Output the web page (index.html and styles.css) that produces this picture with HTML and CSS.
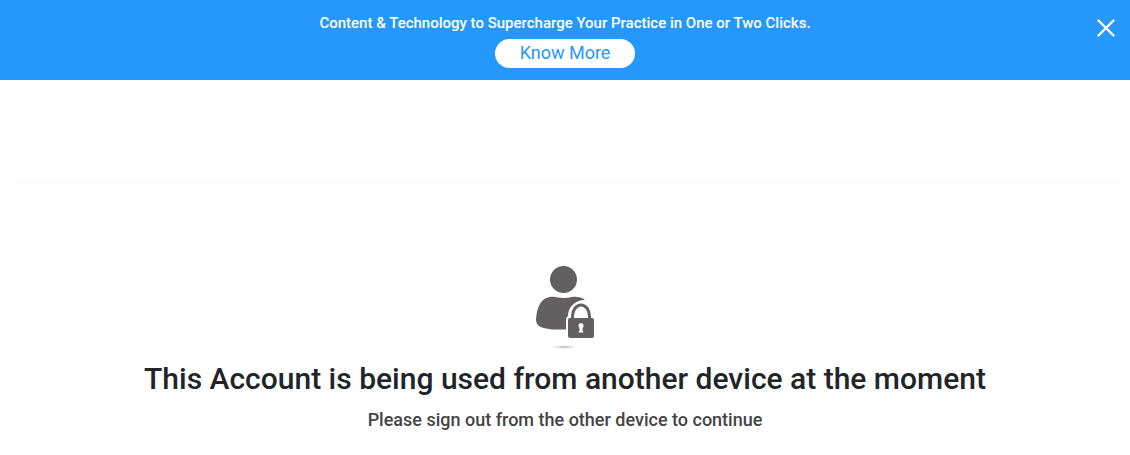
FILE: index.html
```
<!DOCTYPE html>
<html lang="en">
<head>
<meta charset="utf-8">
<title>Account in use</title>
<link rel="stylesheet" href="styles.css">
</head>
<body>
<aside class="banner">
  <div class="banner-content">
    <p class="banner-text">Content &amp; Technology to Supercharge Your Practice in One or Two Clicks.</p>
    <button class="banner-button" type="button">Know More</button>
  </div>
  <button class="close" type="button" aria-label="Close">
    <svg width="18" height="18" viewBox="0 0 18 18"><path d="M1.500 1.500 16.500 16.500M16.500 1.500 1.500 16.500" stroke="currentColor" stroke-width="2.400" fill="none" stroke-linecap="round"/></svg>
  </button>
</aside>
<header class="header"></header>
<main class="message">
  <svg class="lock-icon" width="66" height="88" viewBox="0 0 66 88" aria-hidden="true">
    <defs><radialGradient id="shade"><stop offset="0" stop-color="#aaa"/><stop offset="1" stop-color="#fff" stop-opacity="0"/></radialGradient></defs>
    <g fill="#636061">
      <circle cx="31.500" cy="16.500" r="13.500"/>
      <path d="M18 34C23 33 26 35 32 35S40 33 45 34C48 34 51 35 53 37C43 37 36 44 36 53Q34 54 34 57V66.500C22 67 12 66 7 63Q4 61 4 56C5 44 9 35 18 34Z"/>
      <rect x="36" y="55" width="26" height="20" rx="2"/>
    </g>
    <path d="M40.500 56V53a8.500 11 0 0 1 17 0V56" fill="none" stroke="#636061" stroke-width="3"/>
    <path d="M49 60a2.800 2.800 0 0 1 1.500 5V67.500L51.500 69.500H46.500L47.500 67.500V65A2.800 2.800 0 0 1 49 60Z" fill="#fff"/>
    <ellipse cx="32" cy="84" rx="17" ry="2.500" fill="url(#shade)"/>
  </svg>
  <h1 class="title">This Account is being used from another device at the moment</h1>
  <p class="subtitle">Please sign out from the other device to continue</p>
</main>
</body>
</html>
```
FILE: styles.css
```
* { box-sizing: border-box; }
body { margin: 0; background: #fff; color: #212529; font-family: Roboto, sans-serif; }
.banner { display: grid; grid-template-columns: 48px 1fr 48px; min-height: 80px; background: #2698fb; color: #fff; }
.banner-content { grid-column: 2; display: flex; flex-direction: column; align-items: center; padding-top: 12px; gap: 5px; }
.banner-text { margin: 0; font-size: 15px; line-height: 22px; font-weight: 500; }
.banner-button { padding: 0 25px 2px; border: 0; border-radius: 15px; background: #fff; color: #2698fb; font: 400 18px/27px Roboto, sans-serif; }
.close { display: flex; align-self: start; justify-content: center; margin-top: 19px; padding: 0; border: 0; background: none; color: #fff; }
.header { height: 100px; margin: 0 12px; box-shadow: 0 6px 6px -2px #fafafa; }
.message { display: flex; flex-direction: column; align-items: center; padding: 83px 16px 16px; text-align: center; }
.title { margin: 10px 0 8px; font-size: 30px; line-height: 36px; font-weight: 500; }
.subtitle { margin: 3px 0 8px; font-size: 18px; line-height: 24px; font-weight: 500; color: #444; }
```
